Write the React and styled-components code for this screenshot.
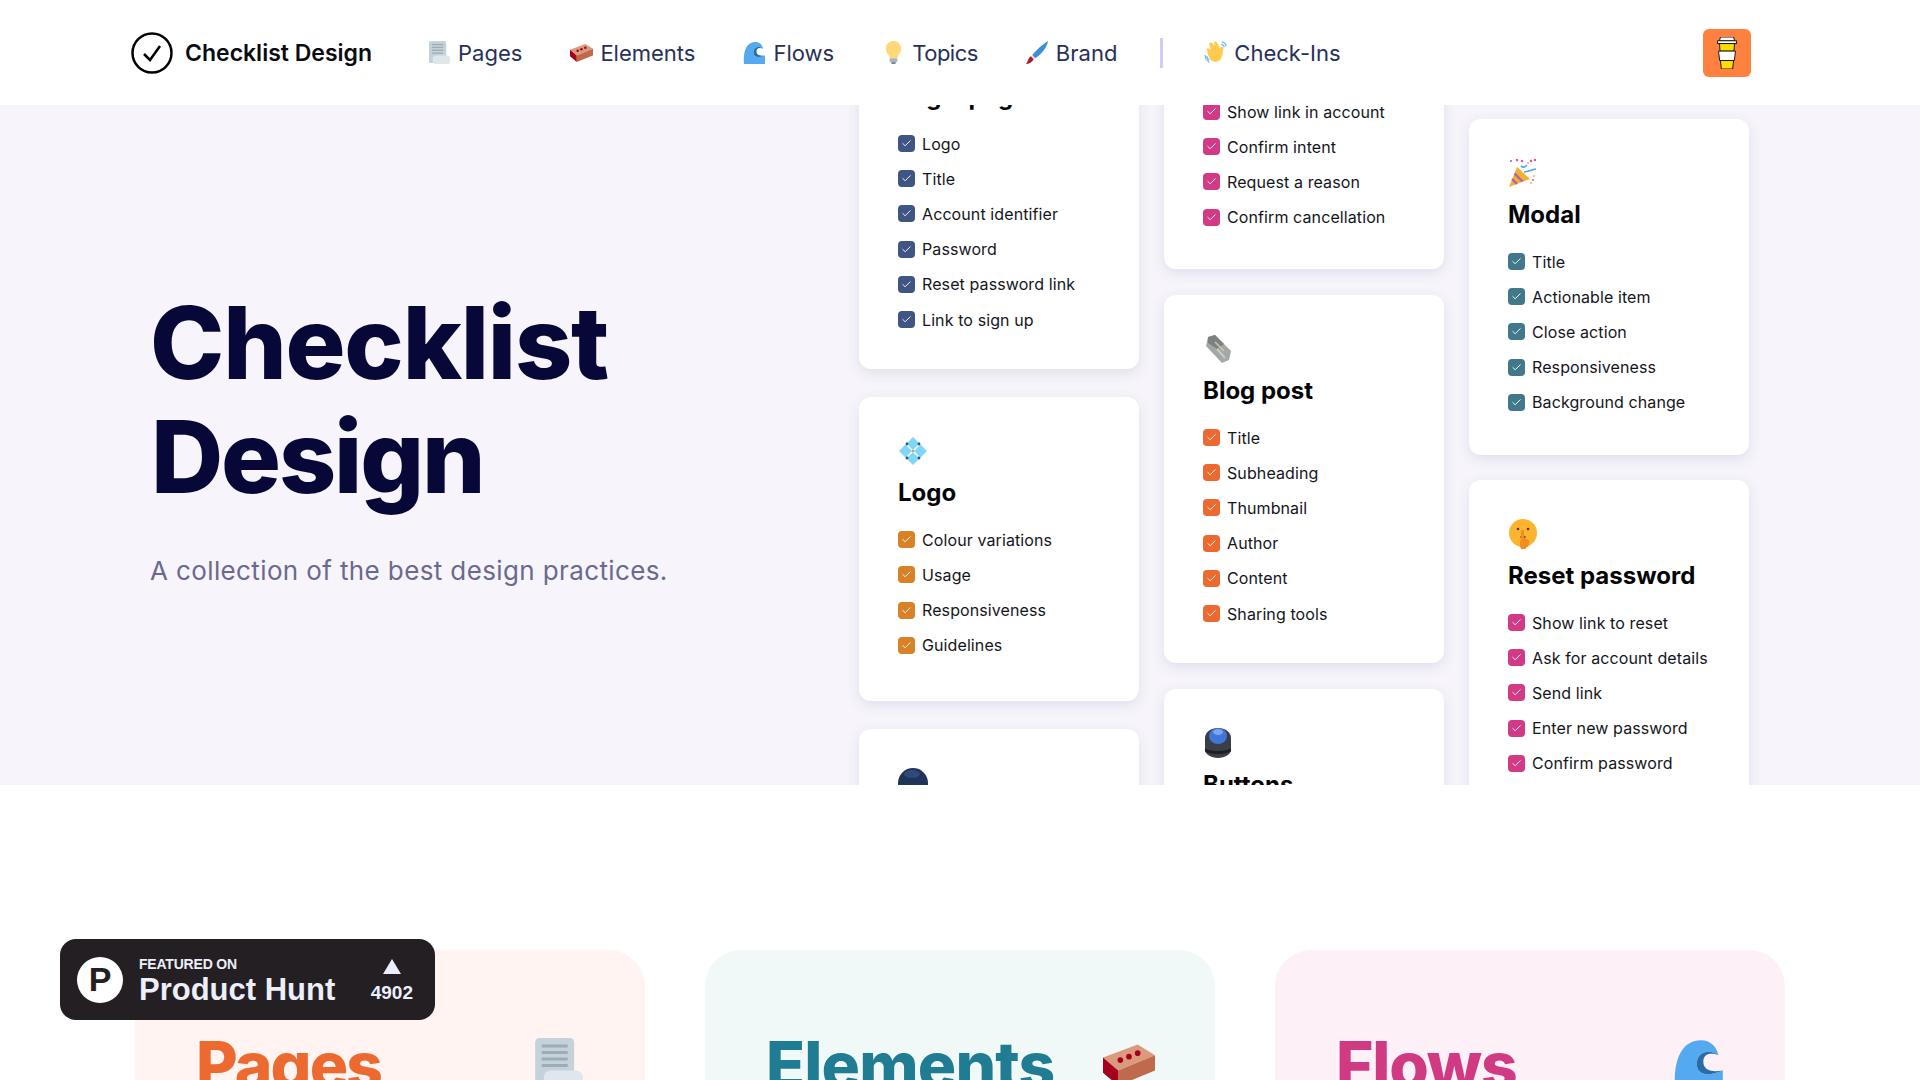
import React from 'react';
import styled, { createGlobalStyle } from 'styled-components';
import { Check } from 'lucide-react';

const GlobalStyle = createGlobalStyle`
  html, body {
    margin: 0;
    padding: 0;
    background: #fff;
    overflow: hidden;
  }
  * { box-sizing: border-box; }
`;

const Svg = styled.svg`
  display: block;
  flex-shrink: 0;
  width: ${(p) => p.$size || 24}px;
  height: ${(p) => p.$size || 24}px;
`;

const PageIcon = ({ size }) => (
  <Svg $size={size} viewBox="0 0 24 24">
    <rect x="1" y="0" width="18" height="23" rx="2" fill="#c6d2d9" />
    <g fill="#9cadb9">
      <rect x="4" y="3" width="12" height="1.4" />
      <rect x="4" y="6" width="12" height="1.4" />
      <rect x="4" y="9" width="12" height="1.4" />
      <rect x="4" y="12" width="12" height="1.4" />
    </g>
    <rect x="5" y="15" width="18" height="9" rx="3" fill="#dfe6ec" />
  </Svg>
);

const BrickIcon = ({ size }) => (
  <Svg $size={size} viewBox="0 0 24 24">
    <path d="M0 9 16 3l8 5-17 7z" fill="#dc9a7d" />
    <path d="M7 15 24 8v7L7 22z" fill="#bf6a4c" />
    <path d="M0 9l7 6v7l-7-6z" fill="#a5001e" />
    <g fill="#a5001e">
      <circle cx="8" cy="10.2" r="1.3" />
      <circle cx="12" cy="8.6" r="1.3" />
      <circle cx="16" cy="7" r="1.3" />
    </g>
  </Svg>
);

const WaveIcon = ({ size }) => (
  <Svg $size={size} viewBox="0 0 24 24">
    <path d="M1 24C0 12 3 1 13 1c4 0 7 2.500 8 7-4-3-10-2-10 4 0 5 5 6 12 3v9z" fill="#54aaf0" />
    <path d="M21 8c-4-3-10-2-10 4 0 5 5 6 12 3-6 1-9-.500-9-4 0-3.500 3-4.500 7-3z" fill="#2a6ca8" />
  </Svg>
);

const BulbIcon = ({ size }) => (
  <Svg $size={size} viewBox="0 0 24 24">
    <path d="M12 0c4.500 0 8 3.500 8 8 0 4-3.500 6-4 10H8C7.500 14 4 12 4 8c0-4.500 3.500-8 8-8z" fill="#ffd877" />
    <rect x="8" y="18" width="8" height="4" rx="1" fill="#aab4bf" />
    <rect x="9.500" y="22" width="5" height="2" rx="1" fill="#7f8b97" />
  </Svg>
);

const BrushIcon = ({ size }) => (
  <Svg $size={size} viewBox="0 0 24 24">
    <path d="M23 0C22 7 15 15 9.500 18L6.500 14.500C11 9 18 3 23 0z" fill="#3f8ed4" />
    <path d="M6.500 14.500l3 3.500-1.500 1-3-3z" fill="#d9dfe5" />
    <path d="M5 16l3 3C6.500 22 3 24 0 24c2-2 2-6 5-8z" fill="#a81f2a" />
  </Svg>
);

const HandIcon = ({ size }) => (
  <Svg $size={size} viewBox="0 0 24 24">
    <path d="M6 2c1-1 2.500-.500 3 .500L11 5l-.500-3c0-1.500 2-2 3-.500l3 6c1-1 2.500-2 3.500-1 .500.500.500 1.500 0 2.500-.500 2-.500 5-1.500 8-1 3.500-5 6-8.500 4.500C7 20.500 5.500 18 4.500 15L3 9c-.500-1.500 1.500-2.500 2.500-1L7 10 5.500 4C5.300 3 5.500 2.500 6 2z" fill="#ffcb4c" />
    <path d="M19 1c2 .500 3.500 2 4 4M18.500 3.500c1 .300 2 1 2.500 2.300M1 15c.300 2.500 1.500 5 4 7M3 16c.300 1.500 1 3 2.300 4" fill="none" stroke="#62b7ee" strokeWidth="1.200" strokeLinecap="round" />
  </Svg>
);

const CoffeeIcon = ({ size }) => (
  <Svg $size={size} viewBox="0 0 24 34">
    <path d="M5 0h14l1 4H4z" fill="#fff" stroke="#111" strokeWidth="1" />
    <rect x="2" y="4" width="20" height="3" fill="#fff" stroke="#111" strokeWidth="1" />
    <path d="M4 7h16l-.600 8H4.600z" fill="#ffdd00" stroke="#111" strokeWidth="1" />
    <path d="M3 15h18l-1.200 10H4.200z" fill="#fff" stroke="#111" strokeWidth="1" />
    <path d="M5 25h14l-1 9H6z" fill="#ffdd00" stroke="#111" strokeWidth="1" />
  </Svg>
);

const PartyIcon = ({ size }) => (
  <Svg $size={size} viewBox="0 0 30 30">
    <path d="M1 29 9 9l13 12z" fill="#f2b02c" />
    <path d="M4 21l5 5M6.500 15.500l8 8" stroke="#a85fc7" strokeWidth="2.200" />
    <path d="M13 8c3 2 4 1 6-1M16 14c4 0 7-2 12-3" fill="none" stroke="#45a8ea" strokeWidth="1.600" />
    <g fill="#e0509a">
      <circle cx="9" cy="2" r="1.200" />
      <circle cx="14" cy="3" r="1.200" />
      <circle cx="23" cy="3" r="1.200" />
      <circle cx="27" cy="2" r="1.200" />
      <circle cx="25" cy="22" r="1" />
    </g>
    <g fill="#f2a77a">
      <circle cx="20" cy="5" r="1" />
      <circle cx="26" cy="18" r="1" />
      <circle cx="23" cy="25" r="1" />
    </g>
    <circle cx="3" cy="3" r="1" fill="#3d84c8" />
  </Svg>
);

const NewsIcon = ({ size }) => (
  <Svg $size={size} viewBox="0 0 30 30">
    <path d="M5 3 12 1l16 16-2 9-7 3L3 12z" fill="#a4a7a8" />
    <path d="M5 3l7-2 9 9-7 5-9-6z" fill="#7d8182" />
    <path d="M12 8l9 9" stroke="#d1c3a6" strokeWidth="1.600" />
    <path d="M14 15l8 9" stroke="#c8cbcc" strokeWidth="2" />
  </Svg>
);

const DiamondIcon = ({ size }) => (
  <Svg $size={size} viewBox="0 0 30 30">
    <g fill="#7ed6f8">
      <path d="M15 1l6.500 6.500L15 14 8.500 7.500z" />
      <path d="M22.500 8.500 29 15l-6.500 6.500L16 15z" />
      <path d="M7.500 8.500 14 15l-6.500 6.500L1 15z" />
      <path d="M15 16l6.500 6.500L15 29l-6.500-6.500z" />
    </g>
    <g fill="#2f4f95">
      <circle cx="9" cy="8" r="1.400" />
      <circle cx="21" cy="8" r="1.400" />
      <circle cx="9" cy="22" r="1.400" />
      <circle cx="21" cy="22" r="1.400" />
    </g>
    <circle cx="15" cy="15" r="1.200" fill="#c9a24a" />
  </Svg>
);

const ShushIcon = ({ size }) => (
  <Svg $size={size} viewBox="0 0 30 30">
    <circle cx="15" cy="14" r="14" fill="#fcb42e" />
    <circle cx="10" cy="10" r="1.300" fill="#5b3b12" />
    <circle cx="20" cy="10" r="1.300" fill="#5b3b12" />
    <ellipse cx="15" cy="18" rx="3" ry="1.200" fill="#8f5a16" />
    <path d="M13 30c-2-5-1-8 0-10V12c0-1.500 3-1.500 3 0v7l5 2c1 4-1 7-4 9z" fill="#f08f1f" />
  </Svg>
);

const ButtonIcon = ({ size }) => (
  <Svg $size={size} viewBox="0 0 30 30">
    <path d="M2 10C2 4 8 0 15 0s13 4 13 10v12c0 4-6 8-13 8S2 26 2 22z" fill="#3b3f45" />
    <path d="M2 20c3 4 23 4 26 0v3c-3 4-23 4-26 0z" fill="#1d1f23" />
    <ellipse cx="15" cy="8" rx="9" ry="8" fill="#3f76d8" />
    <ellipse cx="15" cy="4" rx="5" ry="3" fill="#79a6ee" />
  </Svg>
);

const SphereIcon = ({ size }) => (
  <Svg $size={size} viewBox="0 0 30 30">
    <circle cx="15" cy="15" r="15" fill="#1f3458" />
    <ellipse cx="14" cy="6" rx="8" ry="4" fill="#2d4a78" />
  </Svg>
);

const Page = styled.div`
  height: 100vh;
  overflow: hidden;
  font-family: Inter, "Liberation Sans", sans-serif;
  background: #fff;
`;

const Nav = styled.nav`
  height: 105px;
  padding: 0 169px 0 131px;
  display: flex;
  align-items: center;
  background: #fff;
`;

const Brand = styled.a`
  display: flex;
  align-items: center;
  gap: 12px;
  margin-right: 56px;
  font-size: 23px;
  font-weight: 600;
  color: #0b0b12;
`;

const NavLinks = styled.div`
  display: flex;
  align-items: center;
  gap: 48px;
  flex: 1;
`;

const NavLink = styled.a`
  display: flex;
  align-items: center;
  gap: 7px;
  font-size: 22px;
  font-weight: 400;
  letter-spacing: ${(p) => p.$spacing || 0}px;
  color: #27305a;
`;

const Divider = styled.span`
  width: 3px;
  height: 30px;
  margin: 0 -6.5px 0 -5.5px;
  background: #d0ccf5;
`;

const CoffeeButton = styled.a`
  width: 48px;
  height: 48px;
  border-radius: 6px;
  background: #ff813f;
  display: flex;
  align-items: center;
  justify-content: center;
`;

const Hero = styled.section`
  height: 680px;
  overflow: hidden;
  display: flex;
  align-items: flex-start;
  background: #f7f5fb;
`;

const HeroText = styled.div`
  width: 859px;
  padding: 181px 0 0 150px;
  flex-shrink: 0;
`;

const HeroTitle = styled.h1`
  margin: 0;
  font-size: 100px;
  line-height: 114px;
  font-weight: 800;
  color: #070838;
`;

const TitleLine = styled.span`
  display: block;
  margin-left: ${(p) => p.$indent}px;
  letter-spacing: ${(p) => p.$spacing}px;
`;

const HeroSub = styled.p`
  margin: 37px 0 0;
  font-size: 26px;
  line-height: 40px;
  letter-spacing: 0.38px;
  color: #6a6a8e;
`;

const Columns = styled.div`
  display: flex;
  align-items: flex-start;
  gap: 25px;
`;

const Column = styled.div`
  width: 280px;
  margin-top: ${(p) => p.$offset}px;
  display: flex;
  flex-direction: column;
  gap: ${(p) => p.$gap}px;
`;

const Card = styled.article`
  height: ${(p) => (p.$height ? `${p.$height}px` : 'auto')};
  padding: 39px 20px 32px 39px;
  border-radius: 12px;
  background: #fff;
  box-shadow: 0 4px 14px rgba(60, 50, 120, 0.12);
`;

const CardTitle = styled.h3`
  margin: 12px 0 14px;
  font-size: 24px;
  line-height: 30px;
  font-weight: 700;
  color: #050508;
`;

const List = styled.ul`
  margin: 0;
  padding: 0;
  list-style: none;
`;

const Item = styled.li`
  height: 35.2px;
  display: flex;
  align-items: center;
  gap: 7px;
  font-size: 16px;
  letter-spacing: 0.1px;
  color: #15151c;
`;

const Box = styled.span`
  width: 17px;
  height: 17px;
  border-radius: 4px;
  background: ${(p) => p.$color};
  color: #fff;
  display: flex;
  align-items: center;
  justify-content: center;
  flex-shrink: 0;
`;

const Sections = styled.section`
  padding: 165px 0 0 135px;
  display: flex;
  gap: 60px;
`;

const Section = styled.div`
  width: 510px;
  height: 400px;
  padding: 80px 60px 0 61px;
  border-radius: 36px;
  background: ${(p) => p.$bg};
  display: flex;
  justify-content: space-between;
  align-items: flex-start;
`;

const SectionTitle = styled.h2`
  margin: 0;
  font-size: 64px;
  line-height: 70px;
  font-weight: 800;
  letter-spacing: ${(p) => p.$spacing}px;
  color: ${(p) => p.$color};
`;

const SectionIcon = styled.div`
  padding-top: 8px;
`;

const Badge = styled.a`
  position: fixed;
  left: 60px;
  bottom: 60px;
  width: 375px;
  height: 81px;
  padding: 0 22px 0 17px;
  border-radius: 16px;
  background: #231f22;
  color: #eceffb;
  display: flex;
  align-items: center;
  font-family: "Liberation Sans", Arial, sans-serif;
`;

const BadgeLogo = styled.span`
  width: 46px;
  height: 46px;
  border-radius: 50%;
  background: #fff;
  color: #231f22;
  display: flex;
  align-items: center;
  justify-content: center;
  font-size: 34px;
  font-weight: 700;
  margin-right: 16px;
`;

const BadgeText = styled.div`
  flex: 1;
  padding-top: 3px;
`;

const BadgeSmall = styled.div`
  font-size: 14px;
  line-height: 15px;
  font-weight: 700;
  letter-spacing: -0.2px;
`;

const BadgeName = styled.div`
  margin-top: 1px;
  font-size: 31px;
  line-height: 33px;
  font-weight: 700;
`;

const Votes = styled.div`
  display: flex;
  flex-direction: column;
  align-items: center;
  gap: 11px;
  font-size: 19px;
  line-height: 16px;
  font-weight: 700;
`;

const Triangle = styled.span`
  width: 0;
  height: 0;
  border-left: 9px solid transparent;
  border-right: 9px solid transparent;
  border-bottom: 15px solid #eceffb;
`;

const navLinks = [
  { label: 'Pages', Icon: PageIcon },
  { label: 'Elements', Icon: BrickIcon },
  { label: 'Flows', Icon: WaveIcon },
  { label: 'Topics', Icon: BulbIcon, spacing: -0.5 },
  { label: 'Brand', Icon: BrushIcon },
];

const columns = [
  {
    offset: -104,
    gap: 28,
    cards: [
      { title: 'Login page', color: '#3f5584', items: ['Logo', 'Title', 'Account identifier', 'Password', 'Reset password link', 'Link to sign up'] },
      { title: 'Logo', Icon: DiamondIcon, color: '#d98127', height: 304, items: ['Colour variations', 'Usage', 'Responsiveness', 'Guidelines'] },
      { Icon: SphereIcon, height: 300, items: [] },
    ],
  },
  {
    offset: -136,
    gap: 26,
    cards: [
      { title: 'Cancel account', color: '#d23a85', height: 300, items: ['Show link in account', 'Confirm intent', 'Request a reason', 'Confirm cancellation'] },
      { title: 'Blog post', Icon: NewsIcon, color: '#ec6a2f', height: 368, items: ['Title', 'Subheading', 'Thumbnail', 'Author', 'Content', 'Sharing tools'] },
      { title: 'Buttons', Icon: ButtonIcon, height: 300, items: [] },
    ],
  },
  {
    offset: 14,
    gap: 25,
    cards: [
      { title: 'Modal', Icon: PartyIcon, color: '#41798a', height: 336, items: ['Title', 'Actionable item', 'Close action', 'Responsiveness', 'Background change'] },
      { title: 'Reset password', Icon: ShushIcon, color: '#d23a85', items: ['Show link to reset', 'Ask for account details', 'Send link', 'Enter new password', 'Confirm password'] },
    ],
  },
];

const sections = [
  { title: 'Pages', bg: '#fff4f1', color: '#ec6a30', spacing: -1.8, Icon: PageIcon },
  { title: 'Elements', bg: '#f0f9f8', color: '#207c92', spacing: -0.8, Icon: BrickIcon },
  { title: 'Flows', bg: '#fef0f7', color: '#d03a82', spacing: -1.2, Icon: WaveIcon },
];

const ChecklistCard = ({ title, Icon, color, height, items }) => (
  <Card $height={height}>
    {Icon ? <Icon size={30} /> : <Svg $size={30} />}
    {title && <CardTitle>{title}</CardTitle>}
    <List>
      {items.map((item) => (
        <Item key={item}>
          <Box $color={color}>
            <Check size={11} strokeWidth={2} />
          </Box>
          {item}
        </Item>
      ))}
    </List>
  </Card>
);

export default function App() {
  return (
    <Page>
      <GlobalStyle />
      <Nav>
        <Brand>
          <Svg $size={42} viewBox="0 0 42 42">
            <circle cx="21" cy="21" r="19.500" fill="none" stroke="#000" strokeWidth="2.500" />
            <path d="M13 22l6 6 10-14" fill="none" stroke="#000" strokeWidth="2.500" />
          </Svg>
          Checklist Design
        </Brand>
        <NavLinks>
          {navLinks.map(({ label, Icon, spacing }) => (
            <NavLink key={label} $spacing={spacing}>
              <Icon size={23} />
              {label}
            </NavLink>
          ))}
          <Divider />
          <NavLink>
            <HandIcon size={23} />
            Check-Ins
          </NavLink>
        </NavLinks>
        <CoffeeButton>
          <CoffeeIcon size={32} />
        </CoffeeButton>
      </Nav>
      <Hero>
        <HeroText>
          <HeroTitle>
            <TitleLine $indent={0} $spacing={-1.2}>Checklist</TitleLine>
            <TitleLine $indent={1} $spacing={-2.2}>Design</TitleLine>
          </HeroTitle>
          <HeroSub>A collection of the best design practices.</HeroSub>
        </HeroText>
        <Columns>
          {columns.map((column) => (
            <Column key={column.offset} $offset={column.offset} $gap={column.gap}>
              {column.cards.map((card, i) => (
                <ChecklistCard key={i} {...card} />
              ))}
            </Column>
          ))}
        </Columns>
      </Hero>
      <Sections>
        {sections.map(({ title, bg, color, spacing, Icon }) => (
          <Section key={title} $bg={bg}>
            <SectionTitle $color={color} $spacing={spacing}>{title}</SectionTitle>
            <SectionIcon>
              <Icon size={52} />
            </SectionIcon>
          </Section>
        ))}
      </Sections>
      <Badge>
        <BadgeLogo>P</BadgeLogo>
        <BadgeText>
          <BadgeSmall>FEATURED ON</BadgeSmall>
          <BadgeName>Product Hunt</BadgeName>
        </BadgeText>
        <Votes>
          <Triangle />
          4902
        </Votes>
      </Badge>
    </Page>
  );
}
